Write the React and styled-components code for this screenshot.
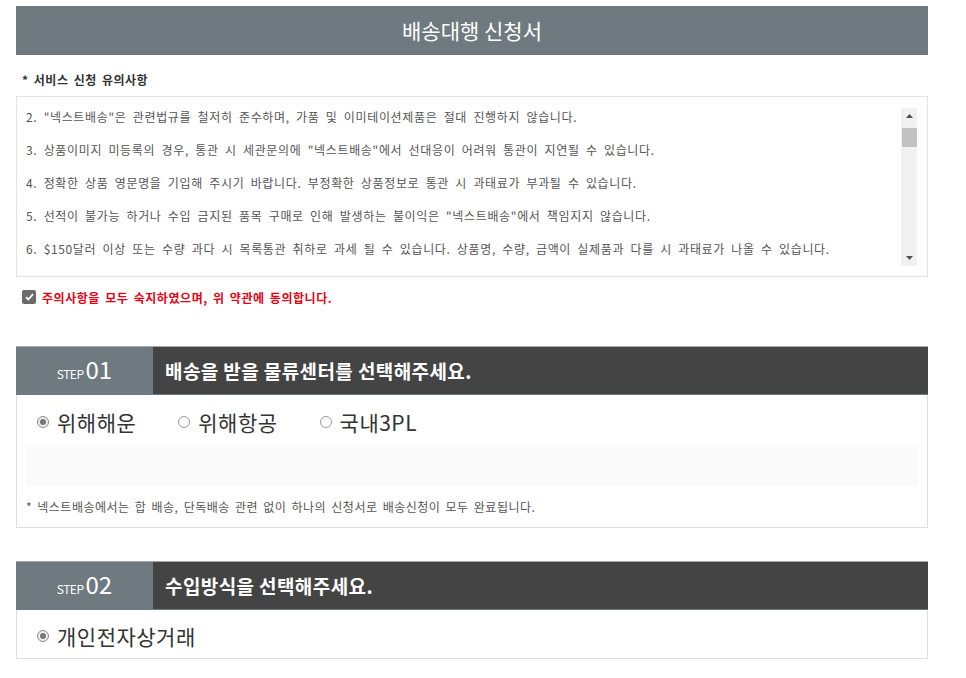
import React from 'react'
import styled, { createGlobalStyle } from 'styled-components'

const GlobalStyle = createGlobalStyle`
  body {
    margin: 0;
    background: #fff;
    font-family: "Noto Sans CJK KR", "Noto Sans", sans-serif;
    color: #333;
  }
`

const Page = styled.div`
  width: 912px;
  padding: 6px 0 0 16px;
`

const TitleBar = styled.h1`
  margin: 0;
  height: 49px;
  line-height: 49px;
  background: #6f7a80;
  color: #fff;
  text-align: center;
  font-size: 21px;
  font-weight: 400;
`

const Label = styled.div`
  margin: 17px 0 8px 6px;
  font-size: 12px;
  line-height: 16px;
  font-weight: 700;
  letter-spacing: 0.5px;
  word-spacing: 2px;
  color: #333;
`

const NoticeBox = styled.div`
  box-sizing: border-box;
  height: 181px;
  border: 1px solid #e3e3e3;
  display: flex;
  padding: 3px 10px 0 9px;
  overflow: hidden;
`

const NoticeText = styled.div`
  flex: 1;
  font-size: 12px;
  line-height: 33px;
  color: #555;
  letter-spacing: 0.65px;
  word-spacing: 3px;
  white-space: nowrap;
`

const ScrollTrack = styled.div`
  width: 16px;
  height: 158px;
  margin-top: 8px;
  background: #f1f1f1;
  display: flex;
  flex-direction: column;
  align-items: center;
`

const Arrow = styled.div`
  height: 16px;
  display: flex;
  align-items: center;
  justify-content: center;
`

const Thumb = styled.div`
  width: 15px;
  height: 19px;
  margin-top: 4px;
  background: #c1c1c1;
`

const TrackFill = styled.div`
  flex: 1;
`

const AgreeRow = styled.label`
  display: flex;
  align-items: center;
  gap: 6px;
  margin: 12px 0 0 6px;
  height: 16px;
  font-size: 12px;
  font-weight: 700;
  letter-spacing: 0.55px;
  word-spacing: 2px;
  color: #e60012;
`

const CheckBox = styled.span`
  width: 14px;
  height: 14px;
  border-radius: 2px;
  background: #6b6b6b;
  display: inline-flex;
  align-items: center;
  justify-content: center;
`

const StepBox = styled.section`
  margin-top: ${p => p.$top}px;
  border: 1px solid #dedede;
  border-top: none;
`

const StepHeader = styled.div`
  display: flex;
  height: 49px;
  margin: 0 -1px;
  box-sizing: border-box;
  border-top: 1px solid #a3a8ab;
  border-bottom: 1px solid #6f7a80;
`

const StepNo = styled.div`
  width: 137px;
  background: #6f7a80;
  color: #fff;
  display: flex;
  align-items: baseline;
  justify-content: center;
  padding-top: 8px;
  box-sizing: border-box;
  gap: 2px;
`

const StepSmall = styled.span`
  font-size: 12px;
  letter-spacing: -0.5px;
`

const StepNum = styled.span`
  font-size: 24px;
  line-height: 28px;
`

const StepTitle = styled.div`
  flex: 1;
  background: #444;
  color: #fff;
  font-size: 19px;
  font-weight: 700;
  letter-spacing: 0.4px;
  line-height: 47px;
  padding-left: 12px;
`

const RadioRow = styled.div`
  display: flex;
  align-items: center;
  gap: 42px;
  height: ${p => p.$h}px;
  padding: 4px 0 0 20px;
  box-sizing: border-box;
`

const RadioItem = styled.label`
  display: flex;
  align-items: center;
  gap: 8px;
  font-size: 21px;
  letter-spacing: 0.5px;
  color: #333;
`

const RadioDot = styled.span`
  width: 12px;
  height: 12px;
  box-sizing: border-box;
  border-radius: 50%;
  border: 1px solid ${p => (p.$on ? '#8a8a8a' : '#9a9a9a')};
  background: ${p => (p.$on ? '#eee' : '#fff')};
  display: inline-flex;
  align-items: center;
  justify-content: center;
  &::after {
    content: '';
    width: 6px;
    height: 6px;
    border-radius: 50%;
    background: ${p => (p.$on ? '#777' : 'transparent')};
  }
`

const GrayPanel = styled.div`
  height: 41px;
  margin: 0 9px;
  background: #fafafa;
`

const Note = styled.div`
  height: 41px;
  line-height: 41px;
  padding-left: 9px;
  font-size: 12px;
  letter-spacing: 0.5px;
  word-spacing: 2px;
  color: #555;
`

const notices = [
  '2. "넥스트배송"은 관련법규를 철저히 준수하며, 가품 및 이미테이션제품은 절대 진행하지 않습니다.',
  '3. 상품이미지 미등록의 경우, 통관 시 세관문의에 "넥스트배송"에서 선대응이 어려워 통관이 지연될 수 있습니다.',
  '4. 정확한 상품 영문명을 기입해 주시기 바랍니다. 부정확한 상품정보로 통관 시 과태료가 부과될 수 있습니다.',
  '5. 선적이 불가능 하거나 수입 금지된 품목 구매로 인해 발생하는 불이익은 "넥스트배송"에서 책임지지 않습니다.',
  '6. $150달러 이상 또는 수량 과다 시 목록통관 취하로 과세 될 수 있습니다. 상품명, 수량, 금액이 실제품과 다를 시 과태료가 나올 수 있습니다.',
]

const centers = [
  { name: '위해해운', on: true },
  { name: '위해항공', on: false },
  { name: '국내3PL', on: false },
]

const Triangle = ({ down }) => (
  <svg width="7" height="4" viewBox="0 0 7 4">
    <path d={down ? 'M0 0h7L3.5 4z' : 'M0 4h7L3.5 0z'} fill="#505050" />
  </svg>
)

const App = () => {
  return (
    <>
      <GlobalStyle />
      <Page>
        <TitleBar>배송대행 신청서</TitleBar>
        <Label>* 서비스 신청 유의사항</Label>
        <NoticeBox>
          <NoticeText>
            {notices.map((line, i) => (
              <div key={i}>{line}</div>
            ))}
          </NoticeText>
          <ScrollTrack>
            <Arrow><Triangle /></Arrow>
            <Thumb />
            <TrackFill />
            <Arrow><Triangle down /></Arrow>
          </ScrollTrack>
        </NoticeBox>
        <AgreeRow>
          <CheckBox>
            <svg width="9" height="8" viewBox="0 0 9 8">
              <path d="M1 4.2l2.3 2.3L8 1.2" stroke="#fff" strokeWidth="1.8" fill="none" />
            </svg>
          </CheckBox>
          주의사항을 모두 숙지하였으며, 위 약관에 동의합니다.
        </AgreeRow>

        <StepBox $top={41}>
          <StepHeader>
            <StepNo>
              <StepSmall>STEP</StepSmall>
              <StepNum>01</StepNum>
            </StepNo>
            <StepTitle>배송을 받을 물류센터를 선택해주세요.</StepTitle>
          </StepHeader>
          <RadioRow $h={50}>
            {centers.map(c => (
              <RadioItem key={c.name}>
                <RadioDot $on={c.on} />
                {c.name}
              </RadioItem>
            ))}
          </RadioRow>
          <GrayPanel />
          <Note>* 넥스트배송에서는 합 배송, 단독배송 관련 없이 하나의 신청서로 배송신청이 모두 완료됩니다.</Note>
        </StepBox>

        <StepBox $top={33}>
          <StepHeader>
            <StepNo>
              <StepSmall>STEP</StepSmall>
              <StepNum>02</StepNum>
            </StepNo>
            <StepTitle>수입방식을 선택해주세요.</StepTitle>
          </StepHeader>
          <RadioRow $h={48}>
            <RadioItem>
              <RadioDot $on />
              개인전자상거래
            </RadioItem>
          </RadioRow>
        </StepBox>
      </Page>
    </>
  )
}

export default App
